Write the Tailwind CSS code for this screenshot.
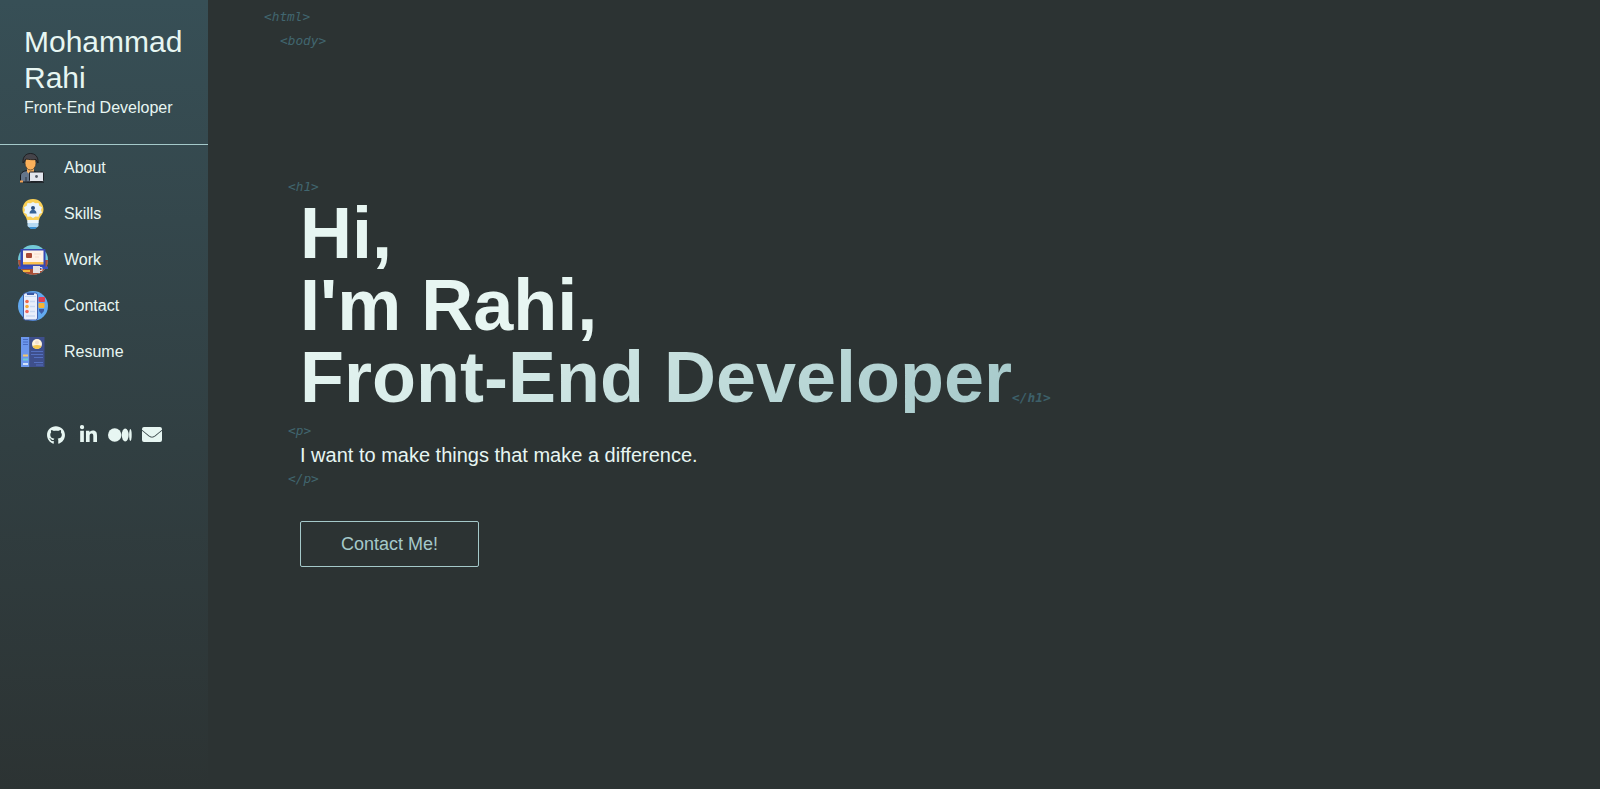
<!DOCTYPE html>
<html lang="en">
<head>
<meta charset="utf-8">
<title>Mohammad Rahi</title>
<script src="https://cdn.jsdelivr.net/npm/@tailwindcss/browser@4"></script>
</head>
<body class="h-[789px] overflow-hidden bg-[#2c3333] font-['Liberation_Sans',Arial,sans-serif] text-[#e7f6f2]">
<div class="flex h-full">
  <aside class="flex w-52 shrink-0 flex-col bg-linear-to-b from-[#374f56] to-[#2c3333]">
    <header class="h-[145px] border-b border-[#a5c9ca] px-6 pt-6">
      <h2 class="text-[30px] leading-9">Mohammad Rahi</h2>
      <p class="text-base leading-6">Front-End Developer</p>
    </header>
    <nav class="flex flex-col">
      <a class="flex h-[46px] items-center gap-4 pl-[18px]">
        <svg class="size-[30px]" viewBox="0 0 30 30">
          <path d="M2.500 29v-6c0-4 4-5.500 9-5.500s8 1.500 8 5.500v6z" fill="#64758a" stroke="#15181c"/>
          <path d="M9 15h7v4l-3.500 3L9 19z" fill="#f2ae60"/>
          <ellipse cx="12.500" cy="10" rx="5.500" ry="7" fill="#fbb15b" stroke="#28211f" stroke-width=".6"/>
          <path d="M5 10C4.500 3.500 8 .5 12.500.5S20.500 3.500 20 10l-2-3.500c-4 .5-7 0-10-.500z" fill="#45444a" stroke="#171719" stroke-width=".8"/>
          <path d="M8 29v-5" stroke="#2b3440"/>
          <rect x="11.500" y="19" width="14" height="9.500" rx="1" fill="#e2e5ed" stroke="#202328"/>
          <circle cx="18.500" cy="23.500" r="1.400" fill="#555b68"/><path d="M2 28.500h3" stroke="#f3a255" stroke-width="2"/><path d="M9 29.300h17" stroke="#202328"/>
        </svg><span>About</span></a>
      <a class="flex h-[46px] items-center gap-4 pl-[18px]">
        <svg class="size-[30px]" viewBox="0 0 30 30">
          <path d="M15 0C8.500 0 4.500 4.700 4.500 10.500c0 5 4 6.500 4.500 11h12c.5-4.500 4.500-6 4.500-11C25.500 4.700 21.500 0 15 0z" fill="#f9cf55"/>
          <path d="M15 3l2.500 1.200 3-.2.800 2.800 2.700 1.500-1 2.700 1 2.800-2.700 1.200-.8 2.800-3-.3L15 19l-2.500-1.500-3 .3-.8-2.800L6 13.800 7 11 6 8.300l2.700-1.500.8-2.800 3 .2z" fill="#eaf4fc"/>
          <circle cx="15" cy="9" r="2" fill="#294f80"/><path d="M11.500 14.500c0-5 7-5 7 0z" fill="#356397"/>
          <path d="M9.500 21h11v6c-2 3-9 3-11 0z" fill="#b7daf2"/><path d="M9.500 21h11v3h-11z" fill="#edf6fc"/><path d="M11 28h8l-1.500 2h-5z" fill="#3e91cf"/>
        </svg><span>Skills</span></a>
      <a class="flex h-[46px] items-center gap-4 pl-[18px]">
        <svg class="size-[30px]" viewBox="0 0 30 30">
          <circle cx="15" cy="15" r="15" fill="#73c9d7"/><path d="M0 15h30a15 15 0 0 1-30 0z" fill="#a94f37"/>
          <rect x="2.500" y="4" width="25" height="18" rx="1" fill="#3547b3"/><rect x="5" y="5.500" width="20.500" height="11.500" fill="#fff1e6"/><path d="M5 17h20.500v2.500H5z" fill="#fac04d"/>
          <rect x="8" y="8" width="6" height="5" rx="1" fill="#aa4935"/><path d="M16 9h7M17 12h4" stroke="#f9dccb"/>
          <path d="M0 21.500h30v2.500H0z" fill="#3951bf"/><path d="M5 26h7" stroke="#f5b53b" stroke-width="2"/><path d="M15 21h7v7h-7z" fill="#e5e1e3"/><path d="M22 22.500h2v3h-2" fill="none" stroke="#e5e1e3"/>
        </svg><span>Work</span></a>
      <a class="flex h-[46px] items-center gap-4 pl-[18px]">
        <svg class="size-[30px]" viewBox="0 0 30 30">
          <circle cx="15" cy="15" r="15" fill="#62a9ef"/>
          <rect x="5.500" y="2" width="14" height="27" rx="2" fill="#e9effb" stroke="#4060ae"/><path d="M9 2h7v2H9z" fill="#3858a4"/><path d="M7 5.500h11" stroke="#c1d8f5"/>
          <circle cx="9" cy="10.500" r="1.800" fill="#ef684b"/><circle cx="9" cy="15.500" r="1.800" fill="#f7ac38"/><circle cx="9" cy="20.500" r="1.800" fill="#ef685b"/>
          <path d="M12 10.500h5M12 15.500h5M12 20.500h5M8 25h9" stroke="#c9d9f2" stroke-width="1.300"/>
          <rect x="20.500" y="6" width="6.500" height="5" rx="1" fill="#df4055"/><rect x="20.500" y="12" width="6" height="5" rx="1" fill="#fab431"/><path d="M21 18h5v2l-2.500 3-2.500-3z" fill="#405ba6"/>
        </svg><span>Contact</span></a>
      <a class="flex h-[46px] items-center gap-4 pl-[18px]">
        <svg class="size-[30px]" viewBox="0 0 30 30">
          <path d="M3 0h8.500v30H3z" fill="#6c97ed"/><path d="M11.500 0H26.500v30H11.500z" fill="#3e4f8c"/>
          <path d="M5 2.500h5M5 5h5M5 7.500h5" stroke="#486bc2"/><path d="M5 18.500h5" stroke="#f4c76a" stroke-width="2"/><path d="M5 22.500h5" stroke="#70cdce" stroke-width="2"/><path d="M5 27h5" stroke="#d2e2fa" stroke-width="2"/>
          <circle cx="19" cy="7" r="5" fill="#fff3dc"/><path d="M14.500 9c3-1.500 6-1.500 9 0-1 4-8 4-9 0z" fill="#f4c64f"/><circle cx="19" cy="5.500" r="2" fill="#f2dfce"/>
          <path d="M13 14.500h12M13 17.500h12M16 20.500h9M16 25.500h9M18 28h7" stroke="#5470c0" stroke-width="1.100"/>
        </svg><span>Resume</span></a>
    </nav>
    <div class="mt-[50px] flex h-5 items-center pl-[47px]">
      <svg class="h-[18.500px] w-[18px]" viewBox="0 0 496 512" fill="currentColor"><path d="M165.900 397.400c0 2-2.300 3.600-5.200 3.600-3.300.3-5.600-1.300-5.600-3.600 0-2 2.300-3.600 5.200-3.600 3-.3 5.600 1.300 5.600 3.600zM244.800 8C106.100 8 0 113.300 0 252c0 110.900 69.800 205.800 169.500 239.200 12.800 2.300 17.300-5.600 17.300-12.100 0-6.200-.3-40.400-.3-61.400 0 0-70 15-84.700-29.800 0 0-11.400-29.100-27.800-36.600 0 0-22.900-15.700 1.600-15.400 0 0 24.900 2 38.600 25.800 21.900 38.600 58.600 27.500 72.900 20.900 2.300-16 8.800-27.100 16-33.700-55.900-6.200-112.300-14.300-112.300-110.500 0-27.500 7.600-41.300 23.600-58.900-2.600-6.500-11.100-33.300 2.600-67.900 20.900-6.500 69 27 69 27 20-5.600 41.500-8.500 62.800-8.500s42.800 2.900 62.800 8.500c0 0 48.100-33.600 69-27 13.700 34.700 5.200 61.400 2.600 67.900 16 17.700 25.800 31.500 25.800 58.900 0 96.500-58.900 104.200-114.800 110.500 9.200 7.900 17 22.900 17 46.400 0 33.700-.3 75.400-.3 83.600 0 6.500 4.600 14.400 17.300 12.100C428.200 457.800 496 362.900 496 252 496 113.300 383.500 8 244.800 8z"/></svg>
      <svg class="-mt-1 ml-[15px] h-[17px] w-[17px]" viewBox="0 0 448 448" fill="currentColor"><path d="M102 448H5V149h97zM54 112a56 56 0 1 1 0-112 56 56 0 0 1 0 112zM448 448h-97V302c0-35-1-75-44-75-46 0-53 34-53 73v148h-97V149h92v41h1c13-24 43-48 88-48 94 0 110 62 110 142z"/></svg>
      <svg class="ml-[11px] h-[14px] w-6" viewBox="0 0 24 14" fill="currentColor"><circle cx="6.700" cy="7" r="6.700"/><ellipse cx="17.200" cy="7" rx="3.500" ry="6.500"/><ellipse cx="22.400" cy="7" rx="1.300" ry="5.900"/></svg>
      <svg class="-mt-0.5 ml-[10px] h-[15px] w-[20px]" viewBox="0 0 20 15" fill="currentColor"><path d="M2 0h16a2 2 0 0 1 2 1.900v.9c-2 1.600-4 3.200-6.100 4.900C12.900 8.500 11.500 9.700 10 9.700S7.100 8.500 6.100 7.700C4 6 2 4.400 0 2.800v-.9A2 2 0 0 1 2 0z"/><path d="M0 3.800c2 1.600 3.600 2.900 5.700 4.600 1 .8 2.700 2.100 4.300 2.100s3.300-1.300 4.300-2.100C16.400 6.700 18 5.400 20 3.800V13a2 2 0 0 1-2 2H2a2 2 0 0 1-2-2z"/></svg>
    </div>
  </aside>
  <main class="flex grow flex-col pl-14">
    <div class="flex flex-col pt-[5px] font-['DejaVu_Sans_Mono',monospace] text-[12.8px] leading-6 text-[#41666f] italic">
      <span>&lt;html&gt;</span><span class="pl-4">&lt;body&gt;</span>
    </div>
    <section class="mt-[122px] flex flex-col items-start pl-6">
      <span class="font-['DejaVu_Sans_Mono',monospace] text-[12.8px] leading-6 text-[#41666f] italic">&lt;h1&gt;</span>
      <h1 class="-mt-0.5 pl-3 text-[72px] leading-[72px] font-bold">
        Hi,<br>I'm Rahi,<br>
        <span class="flex items-baseline"><span class="bg-linear-[135deg,#e7f6f2,#a5c9ca] bg-clip-text text-transparent">Front-End Developer</span><span class="font-['DejaVu_Sans_Mono',monospace] text-[12.8px] leading-6 font-bold text-[#3d606a] italic">&lt;/h1&gt;</span></span>
      </h1>
      <span class="mt-1.5 font-['DejaVu_Sans_Mono',monospace] text-[12.8px] leading-6 text-[#41666f] italic">&lt;p&gt;</span>
      <p class="pl-3 text-xl leading-6">I want to make things that make a difference.</p>
      <span class="font-['DejaVu_Sans_Mono',monospace] text-[12.8px] leading-6 text-[#41666f] italic">&lt;/p&gt;</span>
      <button class="mt-[30px] ml-3 h-[46px] rounded-xs border border-[#a5c9ca] px-10 text-lg text-[#a5c9ca]">Contact Me!</button>
    </section>
  </main>
</div>
</body>
</html>
